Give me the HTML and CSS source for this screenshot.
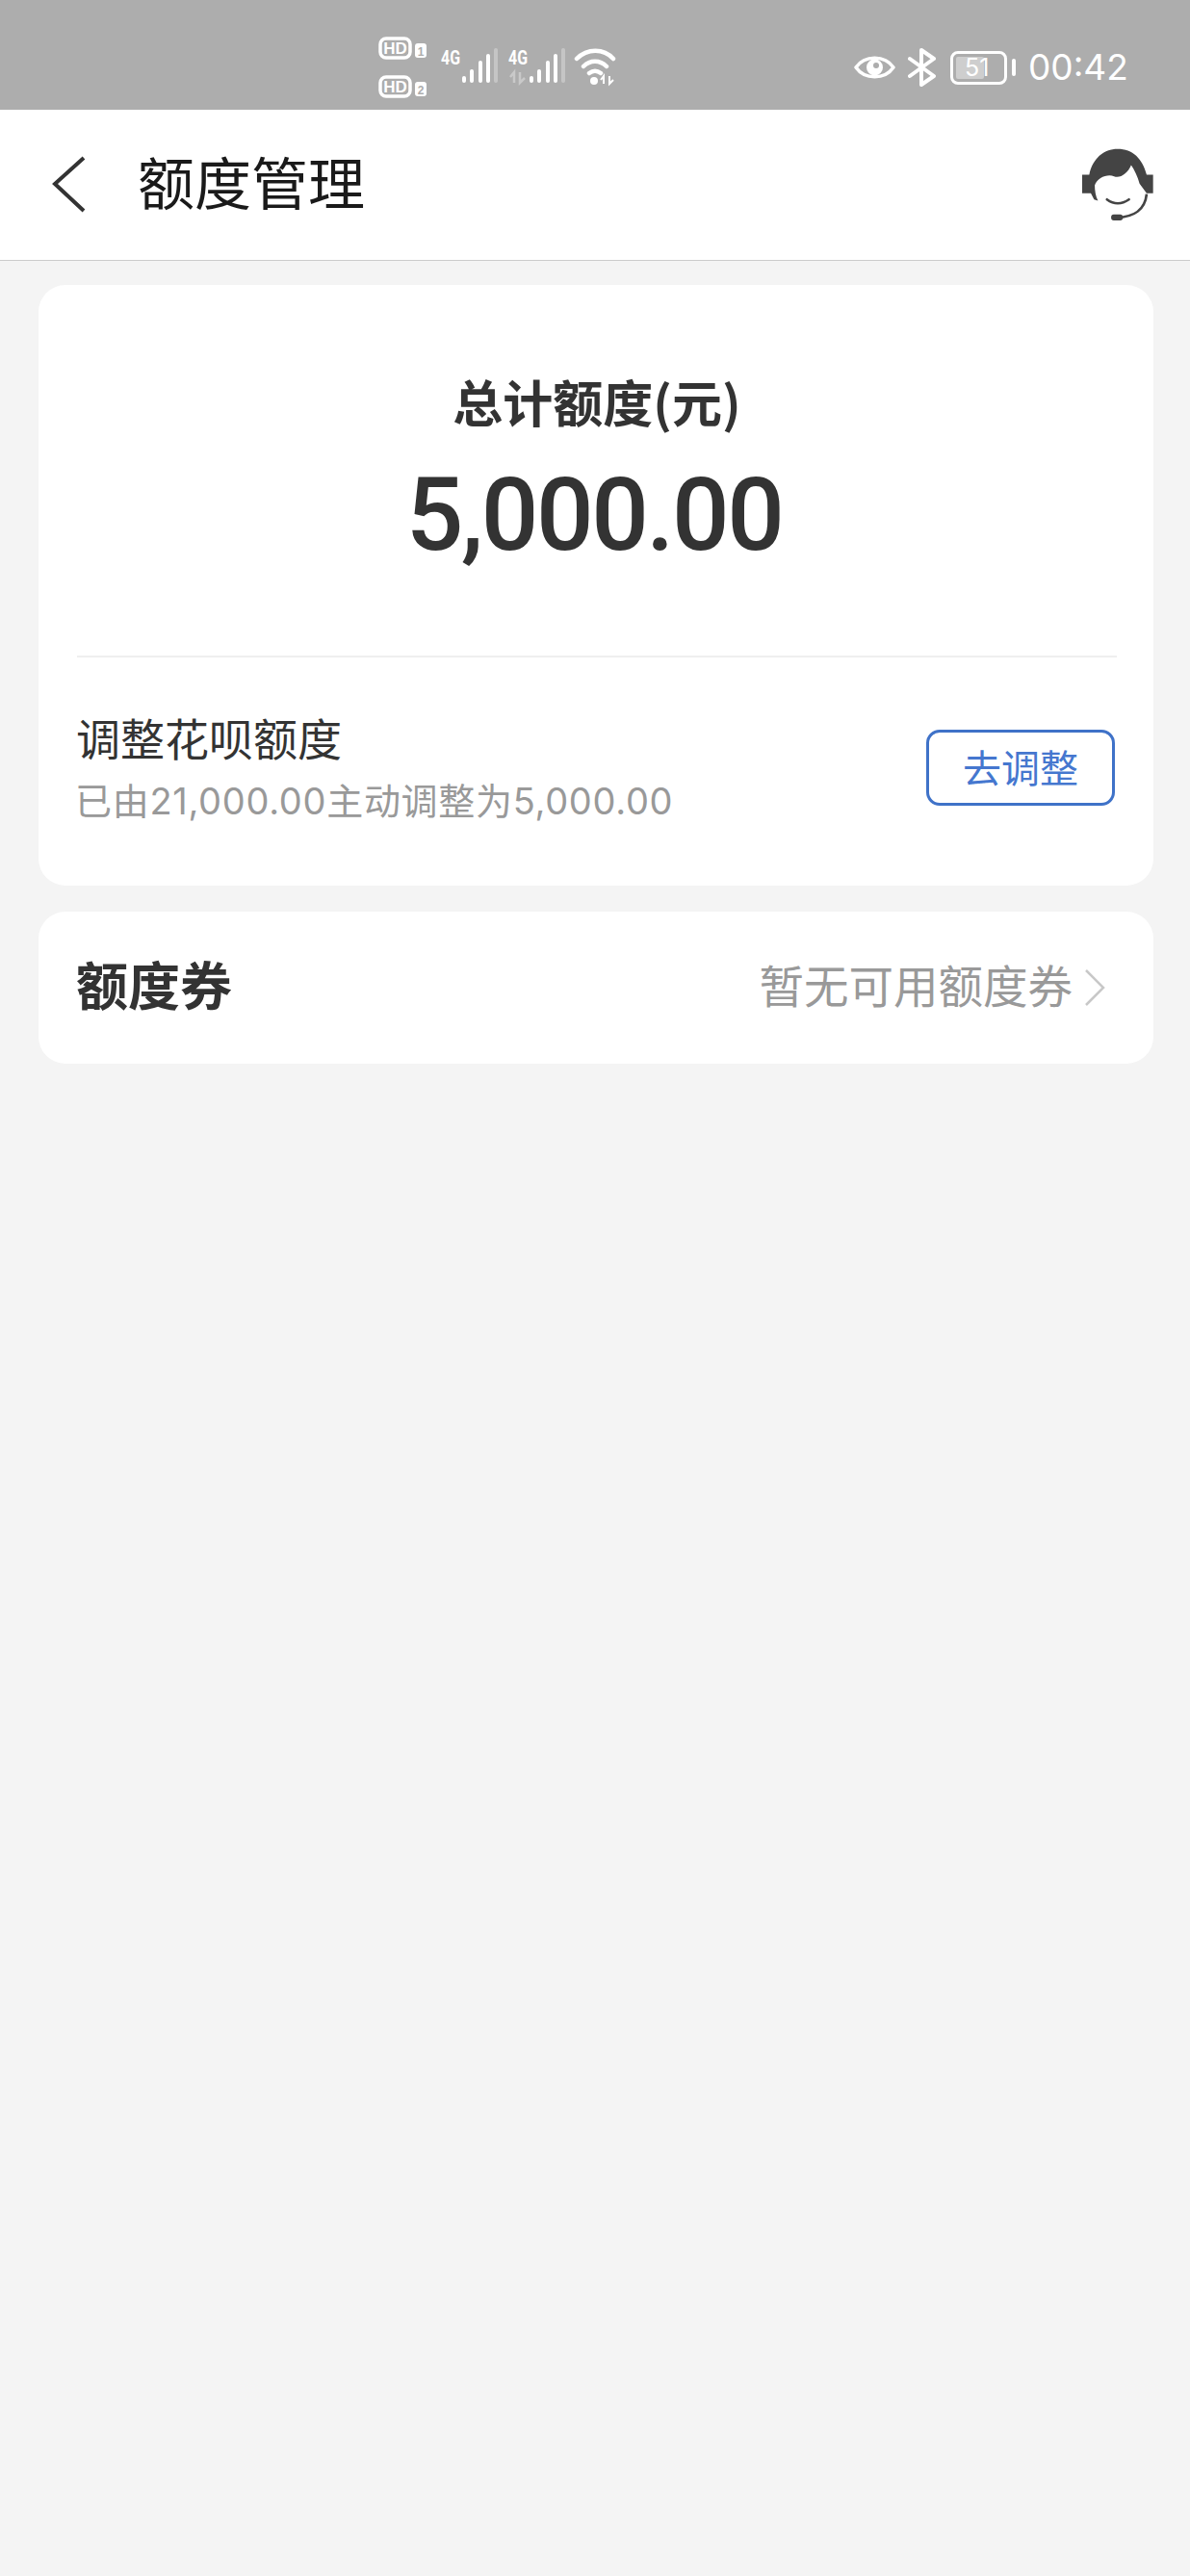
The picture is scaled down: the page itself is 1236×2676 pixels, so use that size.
FILE: index.html
```html
<!DOCTYPE html>
<html lang="zh-CN">
<head>
  <meta charset="utf-8">
  <title>额度管理</title>
  <link rel="stylesheet" href="styles.css">
</head>
<body>

  <!-- status bar -->
  <div class="status">
    <svg class="sims" width="54" height="66" viewBox="0 0 54 66">
      <rect x="2" y="2" width="31" height="20" rx="6" fill="none" stroke="#fff" stroke-width="3.500"/>
      <text x="17.500" y="18" class="sb-hd">HD</text>
      <rect x="38" y="7" width="12" height="15" rx="3" fill="#fff"/>
      <text x="44" y="20" class="sb-num">1</text>
      <rect x="2" y="42" width="31" height="20" rx="6" fill="none" stroke="#fff" stroke-width="3.500"/>
      <text x="17.500" y="58" class="sb-hd">HD</text>
      <rect x="38" y="47" width="12" height="15" rx="3" fill="#fff"/>
      <text x="44" y="60" class="sb-num">2</text>
    </svg>
    <svg class="sig sig-one" width="60" height="46" viewBox="0 -6 60 46">
      <text x="0" y="17" class="sb-4g" textLength="20" lengthAdjust="spacingAndGlyphs">4G</text>
      <g fill="#fff">
        <rect x="22" y="29" width="4" height="7" rx="2"/>
        <rect x="30" y="22" width="4" height="14" rx="2"/>
        <rect x="39" y="13" width="4" height="23" rx="2"/>
        <rect x="47" y="6" width="4" height="30" rx="2"/>
      </g>
      <rect x="55" y="0" width="4" height="36" rx="2" fill="#fff" opacity=".3"/>
    </svg>
    <svg class="sig sig-two" width="60" height="46" viewBox="0 -6 60 46">
      <text x="0" y="17" class="sb-4g" textLength="20" lengthAdjust="spacingAndGlyphs">4G</text>
      <path d="M6 36V26M2 30l4-5v11M12 25v11l5-5" fill="none" stroke="#fff" stroke-width="2.500" opacity=".35"/>
      <g fill="#fff">
        <rect x="22" y="29" width="4" height="7" rx="2"/>
        <rect x="30" y="22" width="4" height="14" rx="2"/>
        <rect x="39" y="13" width="4" height="23" rx="2"/>
        <rect x="47" y="6" width="4" height="30" rx="2"/>
      </g>
      <rect x="55" y="0" width="4" height="36" rx="2" fill="#fff" opacity=".3"/>
    </svg>
    <svg class="wifi" width="46" height="40" viewBox="0 0 46 40">
      <path d="M3 11C14 0 31 0 41 11M10 19c7-7 17-7 24 0M16 26c4-3 8-3 12 0" fill="none" stroke="#fff" stroke-width="4.500" stroke-linecap="round"/>
      <circle cx="21" cy="34" r="4" fill="#fff"/>
      <path d="M31 37V29M28 33l3-4v8M37 29v8l4-4" fill="none" stroke="#fff" stroke-width="2"/>
    </svg>

    <div class="status-right">
      <svg class="eye" width="43" height="34" viewBox="0 0 43 34">
        <path d="M2 17C11 4 32 4 41 17C32 30 11 30 2 17Z" fill="none" stroke="#fff" stroke-width="3.500" stroke-linejoin="round"/>
        <circle cx="21.500" cy="17" r="8.500" fill="#fff"/>
        <circle cx="23" cy="15" r="3" fill="#adadad"/>
      </svg>
      <svg class="bt" width="30" height="40" viewBox="0 0 30 40">
        <path d="M2 11L27 29L14 38V2L27 11L2 29" fill="none" stroke="#fff" stroke-width="4" stroke-linejoin="round" stroke-linecap="round"/>
      </svg>
      <div class="battery">
        <div class="battery-body">
          <div class="battery-fill"></div>
          <span class="battery-num">51</span>
        </div>
        <div class="battery-nub"></div>
      </div>
      <span class="clock">00:42</span>
    </div>
  </div>

  <!-- header -->
  <div class="topbar">
    <svg class="back" width="36" height="60" viewBox="0 0 36 60">
      <path d="M33 2L3 29L33 57" fill="none" stroke="#333" stroke-width="4"/>
    </svg>
    <div class="page-title">额度管理</div>
    <svg class="agent" width="77" height="77" viewBox="130 70 230 230">
      <path d="M133 155h22C165 105 200 75 243 75C290 75 320 105 333 155h20v58h-20l-22-30C305 160 295 140 285 125C275 150 250 168 232 160C210 152 180 165 172 188C172 205 175 222 182 236L170 232L160 213H133Z" fill="#444"/>
      <path d="M210 232Q243 256 278 232" fill="none" stroke="#444" stroke-width="8" stroke-linecap="round"/>
      <path d="M333 215C328 262 295 287 240 288" fill="none" stroke="#444" stroke-width="8"/>
      <rect x="223" y="278" width="36" height="19" rx="8" fill="#444"/>
    </svg>
  </div>

  <div class="content">

    <div class="card">
      <div class="total">
        <div class="total-label">总计额度(元)</div>
        <div class="total-amount">5,000.00</div>
      </div>
      <div class="adjust">
        <div class="adjust-text">
          <div class="adjust-title">调整花呗额度</div>
          <div class="adjust-sub">已由21,000.00主动调整为5,000.00</div>
        </div>
        <div class="adjust-btn">去调整</div>
      </div>
    </div>

    <div class="card coupon">
      <div class="coupon-title">额度券</div>
      <div class="coupon-right">
        <span class="coupon-note">暂无可用额度券</span>
        <svg class="chevron" width="22" height="40" viewBox="0 0 22 40">
          <path d="M2 2L20 20L2 38" fill="none" stroke="#c8c8c8" stroke-width="2.500"/>
        </svg>
      </div>
    </div>

  </div>

</body>
</html>
```

FILE: styles.css
```css
body{
  margin: 0;
  background-color: #f4f4f4;
  font-family: "Noto Sans CJK SC", "Noto Sans", sans-serif;
  color: #333;
}

/* status bar */

.status{
  height: 114px;
  background-color: #adadad;
  display: flex;
  align-items: center;
  padding-top: 20px;
  padding-left: 393px;
  padding-right: 66px;
  box-sizing: border-box;
}

.sims{
  margin-top: 8px;
}

.sig-one{
  margin-left: 11px;
}

.sig-two{
  margin-left: 10px;
}

.wifi{
  margin-left: 8px;
  margin-top: 6px;
}

.sb-hd{
  font-family: "Liberation Sans", sans-serif;
  font-size: 17px;
  font-weight: 700;
  fill: #fff;
  text-anchor: middle;
}

.sb-num{
  font-family: "Liberation Sans", sans-serif;
  font-size: 12px;
  font-weight: 700;
  fill: #adadad;
  text-anchor: middle;
}

.sb-4g{
  font-family: "Roboto", sans-serif;
  font-size: 21px;
  font-weight: 700;
  fill: #fff;
}

.status-right{
  margin-left: auto;
  margin-top: 6px;
  display: flex;
  align-items: center;
}

.bt{
  margin-left: 13px;
}

.battery{
  margin-left: 14px;
  display: flex;
  align-items: center;
}

.battery-body{
  width: 59px;
  height: 35px;
  box-sizing: border-box;
  border: 3px solid #fff;
  border-radius: 8px;
  position: relative;
  padding: 3px;
}

.battery-fill{
  width: 29px;
  height: 100%;
  background-color: #fff;
  opacity: .4;
  border-radius: 2px;
}

.battery-num{
  position: absolute;
  left: 12px;
  top: 0;
  line-height: 29px;
  font-family: "Inter", sans-serif;
  font-size: 25px;
  font-weight: 400;
  color: #fff;
}

.battery-nub{
  width: 4px;
  height: 18px;
  margin-left: 5px;
  background-color: #fff;
  border-radius: 2px;
}

.clock{
  margin-left: 13px;
  width: 102px;
  font-family: "Inter", sans-serif;
  font-size: 37px;
  line-height: 40px;
  font-weight: 400;
  color: #fff;
  white-space: nowrap;
}

/* header */

.topbar{
  height: 157px;
  box-sizing: border-box;
  background-color: #fff;
  border-bottom: 1px solid #ccc;
  display: flex;
  align-items: center;
  padding-left: 54px;
  padding-right: 36px;
}

.page-title{
  margin-left: 53px;
  margin-top: -8px;
  font-size: 59px;
  line-height: 70px;
  color: #1a1a1a;
}

.agent{
  margin-left: auto;
  margin-top: -2px;
}

/* cards */

.content{
  padding: 25px 38px 0 40px;
}

.card{
  background-color: #fff;
  border-radius: 28px;
  margin-bottom: 27px;
}

.total{
  height: 387px;
  box-sizing: border-box;
  padding-top: 85px;
  margin: 0 38px 0 40px;
  border-bottom: 2px solid #efefef;
  text-align: center;
}

.total-label{
  font-size: 52px;
  line-height: 72px;
  font-weight: 700;
}

.total-amount{
  margin-top: 28px;
  padding-right: 6px;
  font-family: "Roboto", sans-serif;
  font-size: 105px;
  line-height: 110px;
  font-weight: 500;
  letter-spacing: -2.500px;
}

.adjust{
  height: 237px;
  box-sizing: border-box;
  padding: 0 40px 13px 40px;
  display: flex;
  align-items: center;
}

.adjust-title{
  font-size: 46px;
  line-height: 62px;
  margin-left: -1px;
}

.adjust-sub{
  margin-top: 11px;
  margin-left: -2px;
  font-family: "Inter", "Noto Sans CJK SC", sans-serif;
  font-size: 38px;
  line-height: 50px;
  font-weight: 400;
  letter-spacing: .7px;
  color: #999;
}

.adjust-btn{
  margin-left: auto;
  margin-top: 5px;
  width: 196px;
  height: 79px;
  box-sizing: border-box;
  border: 3px solid #3f72c8;
  border-radius: 14px;
  text-align: center;
  line-height: 71px;
  font-size: 40px;
  color: #4577cf;
}

.coupon{
  height: 158px;
  padding: 0 50px 0 40px;
  display: flex;
  align-items: center;
  justify-content: space-between;
}

.coupon-title{
  margin-top: -10px;
  margin-left: -1px;
  font-size: 54px;
  font-weight: 700;
}

.coupon-right{
  display: flex;
  align-items: center;
}

.coupon-note{
  margin-top: -10px;
  font-size: 46.500px;
  color: #999;
}

.chevron{
  margin-left: 12px;
}
```
